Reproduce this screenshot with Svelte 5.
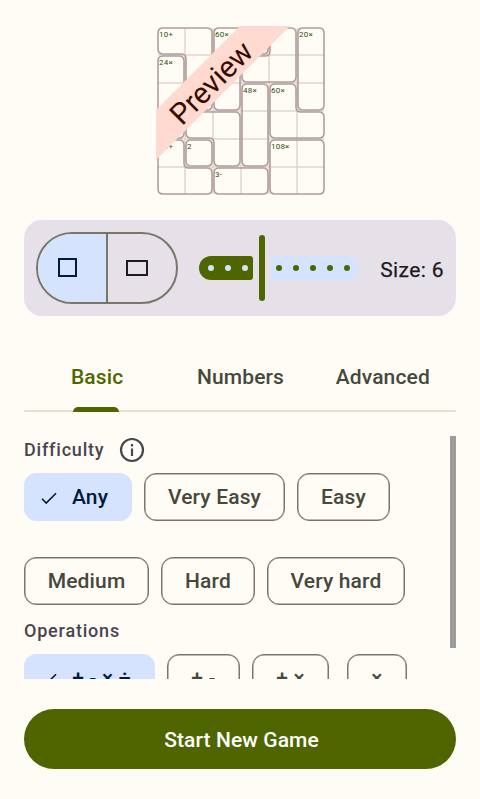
<script>
  const S = 28;
  // Each cage: clockwise outline in cell units, and an optional clue in its first cell.
  const cages = [
    { p: [[0,0],[2,0],[2,3],[1,3],[1,1],[0,1]], at: [0,0], clue: '10+' },
    { p: [[2,0],[4,0],[4,1],[3,1],[3,3],[2,3]], at: [2,0], clue: '60×' },
    { p: [[4,0],[5,0],[5,2],[3,2],[3,1],[4,1]] },
    { p: [[5,0],[6,0],[6,3],[5,3]], at: [5,0], clue: '20×' },
    { p: [[0,1],[1,1],[1,4],[0,4]], at: [0,1], clue: '24×' },
    { p: [[3,2],[4,2],[4,5],[3,5]], at: [3,2], clue: '48×' },
    { p: [[4,2],[5,2],[5,3],[6,3],[6,4],[4,4]], at: [4,2], clue: '60×' },
    { p: [[1,3],[3,3],[3,5],[2,5],[2,4],[1,4]] },
    { p: [[1,4],[2,4],[2,5],[1,5]], at: [1,4], clue: '2' },
    { p: [[0,4],[1,4],[1,5],[2,5],[2,6],[0,6]], at: [0,4], clue: '10+' },
    { p: [[2,5],[4,5],[4,6],[2,6]], at: [2,5], clue: '3-' },
    { p: [[4,4],[6,4],[6,6],[4,6]], at: [4,4], clue: '108×' }
  ];
  const unit = (a, b) => [Math.sign(b[0] - a[0]), Math.sign(b[1] - a[1])];
  function outline(pts) {
    const r = 5, inset = 1, n = pts.length;
    let d = '';
    for (let i = 0; i < n; i++) {
      const u = unit(pts[(i + n - 1) % n], pts[i]);
      const v = unit(pts[i], pts[(i + 1) % n]);
      const x = pts[i][0] * S + (-u[1] - v[1]) * inset;
      const y = pts[i][1] * S + (u[0] + v[0]) * inset;
      d += `${i ? 'L' : 'M'}${x - u[0] * r} ${y - u[1] * r}Q${x} ${y} ${x + v[0] * r} ${y + v[1] * r}`;
    }
    return d + 'Z';
  }
  const inner = [1, 2, 3, 4, 5];
  const tabs = ['Basic', 'Numbers', 'Advanced'];
  const rows = [
    [['Any', 108], ['Very Easy', 141], ['Easy', 93]],
    [['Medium', 125], ['Hard', 94], ['Very hard', 138]]
  ];
  const ops = [['+ - × ÷', 131], ['+ -', 73], ['+ ×', 77], ['×', 60]];
  let tab = $state('Basic');
  let level = $state('Any');
  let op = $state('+ - × ÷');
</script>

{#snippet check()}
  <svg class="check" width="18" height="18" viewBox="0 0 18 18"><path d="M2 9.8 6.2 14 16 4.2" /></svg>
{/snippet}

<main>
  <svg class="board" width="168" height="170" viewBox="0 0 168 170">
    <g transform="translate(1 1)">
      {#each inner as i}
        <path class="thin" d="M{i * S} 1V167M1 {i * S}H167" />
      {/each}
      {#each cages as c}
        <path class="gap" d={outline(c.p)} />
      {/each}
      {#each cages as c}
        <path class="cage" d={outline(c.p)} />
      {/each}
      {#each cages as c}
        {#if c.clue}<text class="clue" x={c.at[0] * S + 2} y={c.at[1] * S + 10}>{c.clue}</text>{/if}
      {/each}
    </g>
    <path class="ribbon" d="M0 84 84 0H134L0 134Z" />
    <text class="preview" transform="translate(62.5 64) rotate(-45)" text-anchor="middle">Preview</text>
  </svg>

  <section class="shape">
    <div class="toggle">
      <button class="on" aria-label="Square"><i class="sq"></i></button>
      <button aria-label="Rectangle"><i class="rect"></i></button>
    </div>
    <div class="slider">
      <div class="done"><b></b><b></b><b></b></div>
      <div class="thumb"></div>
      <div class="rest"><b></b><b></b><b></b><b></b><b></b></div>
    </div>
    <span class="size">Size: 6</span>
  </section>

  <nav>
    {#each tabs as t}
      <button class:active={tab === t} onclick={() => (tab = t)}>{t}</button>
    {/each}
  </nav>

  <section class="options">
    <div class="list">
      <div class="label first">
        <span>Difficulty</span>
        <svg width="26" height="26" viewBox="0 0 26 26"><circle cx="13" cy="13" r="11" /><path d="M13 11.5V19M13 7V9.5" /></svg>
      </div>
      {#each rows as row}
        <div class="row">
          {#each row as [name, w]}
            <button class="chip" class:sel={level === name} style="width:{w}px" onclick={() => (level = name)}>
              {#if level === name}{@render check()}{/if}{name}
            </button>
          {/each}
        </div>
      {/each}
      <div class="label second"><span>Operations</span></div>
      <div class="row ops">
        {#each ops as [name, w]}
          <button class="chip" class:sel={op === name} style="width:{w}px" onclick={() => (op = name)}>
            {#if op === name}{@render check()}{/if}{name}
          </button>
        {/each}
      </div>
    </div>
    <div class="bar"></div>
  </section>

  <button class="start">Start New Game</button>
</main>

<style>
  :global(body) { background: #fffcf5; }
  * { box-sizing: border-box; }
  main {
    height: 799px; padding: 26px 24px 0; overflow: hidden;
    display: flex; flex-direction: column;
    font-family: Roboto, "Liberation Sans", sans-serif; background: #fffcf5;
  }
  button { font: inherit; border: 0; padding: 0; margin: 0; background: none; color: inherit; }
  .board { align-self: center; display: block; flex: none; overflow: visible; }
  .thin { stroke: #dfd5d1; stroke-width: 1.5; fill: none; }
  .gap { stroke: #c6b7b4; stroke-width: 2; fill: none; opacity: .5; }
  .cage { stroke: #a4918f; stroke-width: 1.1; fill: none; }
  .clue { font-size: 8px; fill: #354e16; letter-spacing: .2px; }
  .ribbon { fill: #ffdad0; }
  .preview { font-size: 29.5px; fill: #390c00; }

  .shape {
    margin-top: 24px; height: 96px; flex: none; border-radius: 18px; background: #e6e1e8;
    display: flex; align-items: center; padding: 0 12px;
  }
  .toggle {
    width: 142px; height: 72px; border: 2px solid #77786a; border-radius: 36px;
    display: flex; overflow: hidden; flex: none;
  }
  .toggle button { flex: 1; display: flex; align-items: center; justify-content: center; }
  .toggle .on { background: #d5e3ff; border-right: 2px solid #77786a; flex: none; width: 70px; padding-right: 9px; padding-bottom: 1px; }
  .toggle button + button { padding-right: 10px; padding-bottom: 1px; }
  .toggle i { display: block; }
  .sq { width: 19px; height: 19px; border: 2px solid #001b3c; }
  .rect { width: 22px; height: 16px; border: 2px solid #1c1b1f; }
  .slider { margin-left: 21px; width: 160px; display: flex; align-items: center; justify-content: space-between; flex: none; }
  .done, .rest { height: 24px; display: flex; align-items: center; }
  .done { width: 54px; background: #4f6600; border-radius: 12px 3px 3px 12px; gap: 11px; padding-left: 9px; }
  .rest { width: 88px; background: #d5e3ff; border-radius: 3px 12px 12px 3px; gap: 11px; padding-left: 5px; }
  .thumb { width: 6px; height: 66px; border-radius: 3px; background: #4f6600; }
  b { width: 6px; height: 6px; border-radius: 50%; background: #d5e3ff; }
  .rest b { background: #4f6600; }
  .size { margin-left: auto; padding-top: 3px; font-size: 21px; font-weight: 400; -webkit-text-stroke: .25px; letter-spacing: .4px; color: #1c1b1f; white-space: nowrap; }

  nav { margin-top: 24px; height: 72px; flex: none; display: flex; border-bottom: 2px solid #e2e4d5; }
  nav button {
    flex: 1; position: relative; padding: 4px 0 0 1px; font-size: 21px; font-weight: 500;
    letter-spacing: .15px; color: #46483c;
  }
  nav button:last-child { padding: 4px 2px 0 0; }
  nav .active { color: #4f6600; padding-left: 2px; }
  nav .active::after {
    content: ""; position: absolute; left: 49px; bottom: -2px; width: 46px; height: 5px;
    border-radius: 5px 5px 0 0; background: #4f6600;
  }

  .options { margin-top: 24px; height: 243px; flex: none; display: flex; justify-content: space-between; overflow: hidden; }
  .bar { width: 6px; height: 212px; background: #9e9b9e; }
  .label { display: flex; align-items: center; gap: 15px; font-size: 18px; font-weight: 500; letter-spacing: .8px; color: #49454f; }
  .label svg { fill: none; stroke: #49454f; stroke-width: 2.2; }
  .first { height: 27px; margin-bottom: 10px; }
  .second { height: 26px; margin: -24px 0 11px; }
  .row { display: flex; gap: 12px; margin-bottom: 36px; }
  .chip {
    height: 48px; border: 1px solid #77786a; border-radius: 12px; flex: none;
    box-shadow: inset 0 0 0 .5px #77786a;
    display: flex; align-items: center; justify-content: center; color: #46483c;
    font-size: 21px; font-weight: 500; letter-spacing: .15px; white-space: nowrap;
  }
  .sel { background: #d5e3ff; border-color: #d5e3ff; box-shadow: none; color: #001b3c; gap: 14px; padding-right: 8px; }
  .check { fill: none; stroke: #001b3c; stroke-width: 1.6; margin-top: 2px; flex: none; }
  .ops .chip:last-child { margin-left: 6px; }
  .start {
    margin-top: 30px; height: 60px; flex: none; border-radius: 30px; background: #4f6600;
    color: #fff; font-size: 21px; font-weight: 500; letter-spacing: .1px; padding: 1px 0 0 3px;
  }
</style>
